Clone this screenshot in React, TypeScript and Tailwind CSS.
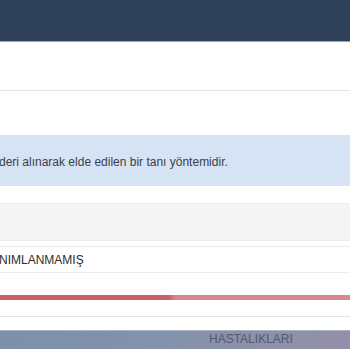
export default function App() {
  return (
    <div className="w-[350px] h-[350px] overflow-hidden bg-white" style={{ fontFamily: '"Liberation Sans", Arial, sans-serif' }}>
      <div className="h-[41px] bg-[#2f4159]" />
      <div className="h-[1px] bg-[#9aa3ad]" />
      <div className="h-[48px] bg-white" />
      <div className="h-[1px] bg-[#e4e4e4]" />
      <div className="h-[44px] bg-white" />
      <div className="h-[51px] bg-[#d6e3f5] flex items-center pt-[3px] text-[12px] text-[#3a3f47]">
        <span className="-ml-[1px]">deri alınarak elde edilen bir tanı yöntemidir.</span>
      </div>
      <div className="h-[17px] bg-white" />
      <div className="h-[38px] bg-[#f4f4f4] border-t border-b border-[#ececec]" />
      <div className="h-[5px] bg-white" />
      <div className="h-[27px] border-t border-b border-[#ececec] flex items-center text-[12px] text-[#2d2d2d]">
        <span className="-ml-[1px]">NIMLANMAMIŞ</span>
      </div>
      <div className="h-[22px] bg-white" />
      <div className="h-[5px] flex">
        <div className="w-[168px] bg-[#c85f6a]" />
        <div className="w-[8px] bg-gradient-to-r from-[#c85f6a] to-[#d8878e]" />
        <div className="flex-1 bg-[#d8878e]" />
      </div>
      <div className="h-[16px] bg-white" />
      <div className="h-[1px] bg-[#e2e2e2]" />
      <div className="h-[13px] bg-white" />
      <div className="h-[19px] bg-gradient-to-r from-[#7d90ab] via-[#8592ab] to-[#948fa8] border-t border-[#a9b3c4] flex items-start">
        <div className="w-[209px]" />
        <span className="text-[12px] leading-[14px] mt-[1px] text-[#525a6b]">HASTALIKLARI</span>
      </div>
    </div>
  );
}
